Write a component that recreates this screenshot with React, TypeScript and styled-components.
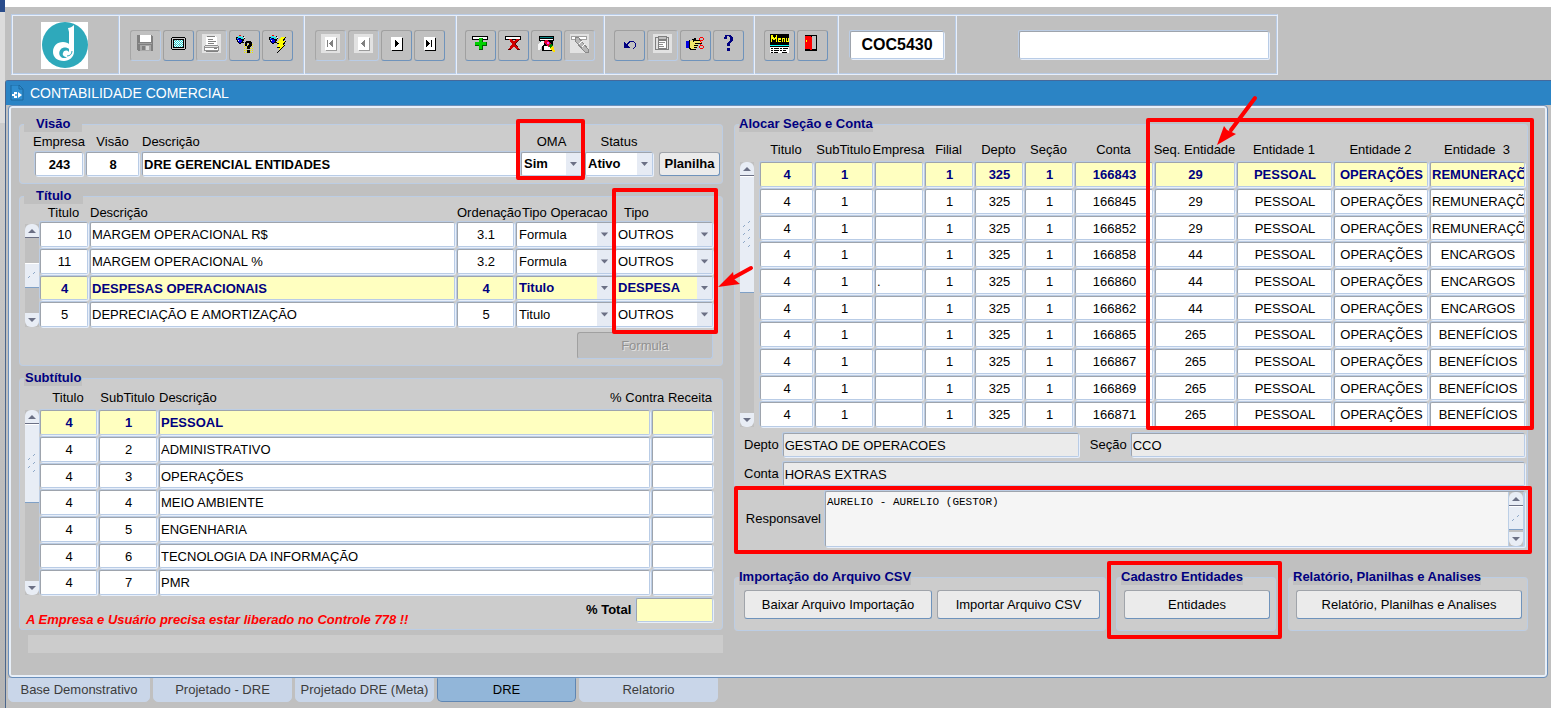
import React from 'react';
import styled, { createGlobalStyle, css } from 'styled-components';

const GlobalStyle = createGlobalStyle`
  *, *::before, *::after { box-sizing: border-box; }
  body {
    margin: 0;
    background: #c0c0c0;
    color: #000;
    font: 13px/16px "Liberation Sans", Arial, sans-serif;
  }
  input, select, button, textarea { font: inherit; color: inherit; margin: 0; }
`;

/* ---------- Page and window chrome ---------- */

const Page = styled.div`
  display: flex;
  min-height: 100vh;
`;

const DesktopEdge = styled.div`
  flex: 0 0 5px;
  background: linear-gradient(#2a4d8c 0 12px, #dcdcdc 12px 123px, #cccccc 123px, #b4b4b4);
`;

const Main = styled.main`
  flex: 1;
  min-width: 0;
  display: flex;
  flex-direction: column;
  border-top: 7px solid #fff;
`;

const Toolbar = styled.header`
  display: flex;
  align-self: flex-start;
  height: 61px;
  margin: 7px 0 5px 6px;
  padding: 1px 0 0 1px;
  border: 1px solid;
  border-color: #b9cce6 #e8effa #e8effa #b9cce6;
  box-shadow: inset 1px 1px 0 #e8effa, inset -1px -1px 0 #b9cce6;
`;

const ToolGroup = styled.div<{ $pad: number }>`
  display: flex;
  align-items: center;
  gap: 2px;
  padding: 0 ${(p) => p.$pad + 1}px 0 ${(p) => p.$pad}px;
  border-right: 1px solid #e8effa;
  box-shadow: inset -1px 0 0 #b9cce6;
  &:last-child { border-right: 0; padding-left: 62px; box-shadow: none; }
`;

const LogoCell = styled.div`
  width: 107px;
  display: flex;
  align-items: center;
  justify-content: center;
  padding-right: 4px;
  border-right: 1px solid #e8effa;
  box-shadow: inset -1px 0 0 #b9cce6;
`;

const ToolButton = styled.button`
  width: 31px;
  height: 31px;
  padding: 0 1px 3px 0;
  display: flex;
  align-items: center;
  justify-content: center;
  background: #c0c0c0;
  border: 1px solid;
  border-color: #a0a0a0 #6f93bb #6f93bb #a0a0a0;
  border-radius: 3px;
  &:disabled { border-color: #a6a6a6 #b9cce6 #b9cce6 #a6a6a6; }
`;

const sunken = css`
  border: 1px solid;
  border-color: #9ea4ad #b9cce6 #b9cce6 #9ea4ad;
  border-radius: 2px;
  box-shadow: 1px 1px 0 #e8effa, -1px -1px 0 #bccde4;
  outline: 0;
`;

const CodeInput = styled.input`
  ${sunken}
  width: 94px;
  height: 28px;
  padding: 0;
  background: #fff;
  text-align: center;
  font-size: 16px;
  font-weight: bold;
`;

const MessageInput = styled.input`
  ${sunken}
  width: 250px;
  height: 28px;
  background: #fff;
`;

const AppWindow = styled.section`
  flex: 1;
  border-left: 1px solid #4b668c;
  border-top: 1px solid #44699c;
  border-top-left-radius: 3px;
`;

const TitleBar = styled.h1`
  display: flex;
  align-items: center;
  gap: 6px;
  height: 24px;
  margin: 0;
  padding: 0 4px;
  background: #2b84c5;
  color: #fff;
  font-size: 14px;
  font-weight: normal;
`;

const Canvas = styled.div`
  display: flex;
  gap: 11px;
  margin: 0 3px 0 2px;
  padding: 10px 19px 24px 10px;
  border: 1px solid #6a8fbb;
  border-radius: 4px;
  box-shadow: inset 0 0 0 2px #e8eff8;
`;

const Column = styled.div<{ $grow: number }>`
  flex: ${(p) => p.$grow} 1 0;
  min-width: 0;
  display: flex;
  flex-direction: column;
`;

/* ---------- Panels ---------- */

const Panel = styled.fieldset<{ $gap?: number; $bottom?: number }>`
  min-width: 0;
  margin: ${(p) => p.$gap ?? 0}px 0 0;
  padding: 0 0 ${(p) => p.$bottom ?? 0}px;
  background: #cccccc;
  border: 1px solid #bccde4;
  border-radius: 4px;
`;

const Legend = styled.legend<{ $pad?: number }>`
  margin-left: 4px;
  padding: 0 ${(p) => p.$pad ?? 1}px;
  background: #c0c0c0;
  color: #000080;
  font-weight: bold;
  white-space: nowrap;
`;

const VisionFields = styled.div`
  display: flex;
  align-items: flex-end;
  gap: 3px;
  padding: 2px 2px 7px 15px;
  > button { margin-left: 3px; }
`;

const Field = styled.div<{ $width?: number; $align?: string }>`
  position: relative;
  flex: ${(p) => (p.$width ? `0 0 ${p.$width}px` : '1')};
  min-width: 0;
  display: flex;
  flex-direction: column;
  align-items: ${(p) => p.$align ?? 'center'};
  gap: 2px;
  white-space: nowrap;
`;

const TextInput = styled.input<{ $align?: string; $flag?: string }>`
  ${sunken}
  width: 100%;
  height: 24px;
  padding: 0 0 0 1px;
  background: ${(p) => (p.$flag === 'total' ? '#ffffc0' : p.readOnly ? '#ebebeb' : '#fff')};
  text-align: ${(p) => p.$align ?? 'left'};
  font-weight: ${(p) => (p.$flag === 'bold' ? 'bold' : 'normal')};
`;

const SelectBox = styled.span`
  position: relative;
  display: block;
  width: 100%;
  svg { position: absolute; right: 1px; top: 1px; height: calc(100% - 2px); pointer-events: none; }
`;

const Select = styled.select<{ $bold?: boolean }>`
  ${sunken}
  appearance: none;
  display: block;
  width: 100%;
  height: 24px;
  padding: 0 16px 0 2px;
  background: #fff;
  font-weight: ${(p) => (p.$bold ? 'bold' : 'inherit')};
`;

const PushButton = styled.button<{ $width?: number; $bold?: boolean; $tall?: boolean }>`
  flex: ${(p) => (p.$width ? `0 0 ${p.$width}px` : '1')};
  height: ${(p) => (p.$tall ? 29 : 24)}px;
  padding: 0;
  background: #ebebeb;
  border: 1px solid;
  border-color: #a0a4aa #6f93bb #6f93bb #a0a4aa;
  border-radius: 3px;
  font-weight: ${(p) => (p.$bold ? 'bold' : 'normal')};
  white-space: nowrap;
  &:disabled {
    height: 27px;
    background: #c0c0c0;
    border-color: #a0a0a0 #b9cce6 #b9cce6 #a0a0a0;
    color: #909090;
    text-shadow: 1px 1px 0 #e0e0e0;
  }
`;

/* ---------- Record grids ---------- */

const GridArea = styled.div<{ $gap: number; $right?: number }>`
  position: relative;
  display: flex;
  gap: ${(p) => p.$gap}px;
  padding: 0 ${(p) => p.$right ?? 0}px 0 5px;
`;

const Table = styled.table`
  flex: 1;
  width: 100%;
  min-width: 0;
  table-layout: fixed;
  border-collapse: collapse;
  th, td { padding: 0; font-weight: inherit; vertical-align: top; }
  td { padding-right: 2px; }
`;

const HeadCell = styled.span<{ $height: number; $align: string; $indent: number }>`
  display: flex;
  align-items: flex-end;
  justify-content: ${(p) => p.$align};
  height: ${(p) => p.$height}px;
  padding: 0 3px ${(p) => (p.$height > 20 ? 4 : 1)}px ${(p) => p.$indent}px;
  white-space: pre;
`;

const Row = styled.tr<{ $current: boolean }>`
  height: 27px;
  input, select { height: 25px; }
  &:nth-child(3n) { height: 26px; }
  &:nth-child(3n) input, &:nth-child(3n) select { height: 24px; }
  ${(p) => p.$current && css`
    color: #000080;
    font-weight: bold;
    input, select { background: #ffffc0; font-weight: bold; }
  `}
`;

const ScrollTrack = styled.div<{ $top: number; $end: number }>`
  flex: 0 0 14px;
  display: flex;
  flex-direction: column;
  margin: ${(p) => p.$top}px 0 ${(p) => p.$end}px;
  background: #c0c0c0;
`;

const ScrollEnd = styled.button<{ $down?: boolean }>`
  flex: 0 0 14px;
  display: flex;
  align-items: center;
  justify-content: center;
  padding: 0;
  background: #e8edf5;
  border: 0 solid #6b7085;
  border-bottom-width: ${(p) => (p.$down ? 0 : 1)}px;
  border-radius: ${(p) => (p.$down ? '0 0 6px 6px' : '6px 6px 0 0')};
`;

const ScrollRoom = styled.div<{ $offset: number }>`
  flex: 1;
  padding-top: ${(p) => p.$offset}px;
`;

const Thumb = styled.div<{ $size: number }>`
  height: ${(p) => p.$size}px;
  display: flex;
  align-items: center;
  justify-content: center;
  background: #e8edf5;
  border-top: 1px solid #fff;
  border-bottom: 1px solid #7fa0c6;
`;

const FormulaRow = styled.div`
  display: flex;
  justify-content: flex-end;
  padding: 3px 9px 6px 0;
`;

const TotalRow = styled.div`
  display: flex;
  align-items: flex-end;
  justify-content: space-between;
  padding: 1px 9px 1px 6px;
`;

const Warning = styled.strong`
  color: #ff0000;
  font-style: italic;
`;

const TotalField = styled.div`
  flex: 0 0 127px;
  display: flex;
  align-items: center;
  gap: 5px;
  padding-bottom: 6px;
  font-weight: bold;
  white-space: nowrap;
`;

const StatusLine = styled.div`
  height: 18px;
  margin: 5px 0 0 9px;
  background: #cccccc;
`;

const DetailRow = styled.div`
  display: flex;
  align-items: center;
  gap: 4px;
  padding: 4px 2px 1px 9px;
`;

const DetailLabel = styled.label<{ $width: number }>`
  flex: 0 0 ${(p) => p.$width}px;
  text-align: right;
`;

const OwnerRow = styled.div`
  position: relative;
  display: flex;
  align-items: center;
  gap: 4px;
  padding: 4px 2px 4px 9px;
`;

const OwnerBox = styled.div`
  ${sunken}
  flex: 1;
  display: flex;
  height: 56px;
  background: #f5f5f5;
`;

const OwnerText = styled.textarea`
  flex: 1;
  padding: 3px 1px;
  border: 0;
  outline: 0;
  resize: none;
  background: transparent;
  font: 11px/14px "Liberation Mono", "Courier New", monospace;
`;

const OwnerScroll = styled.div`
  flex: 0 0 16px;
  display: flex;
  padding: 0 1px;
  background: #bccfe6;
`;

const ActionGroups = styled.div`
  display: flex;
  margin-top: 16px;
`;

const ActionGroup = styled.div<{ $grow: number; $gap: number }>`
  position: relative;
  flex: ${(p) => p.$grow} 1 0;
  min-width: 0;
  margin-right: ${(p) => p.$gap}px;
`;

const ActionButtons = styled.div<{ $left: number }>`
  display: flex;
  gap: 5px;
  padding: 5px 5px 11px ${(p) => p.$left}px;
`;

/* ---------- Red mark-up laid over the form ---------- */

const Highlight = styled.div<{ $inset: string; $width?: number }>`
  position: absolute;
  z-index: 3;
  inset: ${(p) => p.$inset};
  width: ${(p) => (p.$width ? `${p.$width}px` : 'auto')};
  border: 4px solid #ff0000;
  border-radius: 2px;
  pointer-events: none;
`;

const Arrow = styled.svg<{ $inset: string }>`
  position: absolute;
  z-index: 4;
  inset: ${(p) => p.$inset};
  pointer-events: none;
`;

/* ---------- Tabs ---------- */

const Tabs = styled.nav`
  display: flex;
  gap: 3px;
  padding-left: 2px;
`;

const Tab = styled.button<{ $active?: boolean }>`
  width: 139px;
  height: 24px;
  padding: 0;
  background: ${(p) => (p.$active ? '#92b6d9' : '#c9d6e9')};
  border: 1px solid ${(p) => (p.$active ? '#5f86b3' : '#c9d6e9')};
  border-top-color: ${(p) => (p.$active ? '#92b6d9' : '#c9d6e9')};
  border-radius: 0 0 5px 5px;
  color: ${(p) => (p.$active ? '#000' : '#3c3c3c')};
  white-space: nowrap;
  &:first-child { width: 142px; }
`;

/* ---------- Icons ---------- */

const Px = ({ children }: { children: React.ReactNode }) => (
  <svg width="19" height="19" viewBox="0 0 19 19" shapeRendering="crispEdges" aria-hidden="true">
    {children}
  </svg>
);

const Flash = () => (
  <>
    <path d="M1 3h4v1h2v1h2v2H8v2H6v1H4V9H3V8H2V6H1z" fill="#000" />
    <path d="M2 4h2v1h2v1h1v2H6v1H4V8H3V6H2z" fill="#0000e0" />
    <path d="M3 2h3v1h2v2H6V4H3zM2 4h1v1H2z" fill="#20e8f0" />
    <path d="M4 1h2v1H4z" fill="#f00" />
    <path d="M8 2h1v1H8zM9 4h1v1H9zM8 8h1v1H8z" fill="#000" />
    <path d="M3 6h1v1H3zM9 3h1v1H9z" fill="#fff" />
  </>
);

const PageArrow = ({ off, children }: { off?: boolean; children: React.ReactNode }) => (
  <Px>
    {off && <path d="M0 0h19v19H0z" fill="#e2e2e2" />}
    <path d="M5 4h11v13H5z" fill={off ? '#9a9a9a' : '#000'} />
    <path d="M4 3h11v13H4z" fill="#fff" />
    <g fill={off ? '#808080' : '#000'}>{children}</g>
  </Px>
);

const icons: Record<string, React.ReactNode> = {
  save: (
    <Px>
      <path d="M1 1h15v1h1v15H2v-1H1z" fill="#808080" />
      <path d="M4 1h11v7H4z" fill="#fff" />
      <path d="M2 9h14v1H2z" fill="#a0a0a0" />
      <path d="M4 11h11v6H4z" fill="#a8a8a8" />
      <path d="M6 12h3v4H6z" fill="#808080" />
      <path d="M10 12h3v4h-3z" fill="#d8d8d8" />
    </Px>
  ),
  screen: (
    <Px>
      <path d="M3 3h13v1h1v11h-1v1H3v-1H2V4h1z" fill="#000" />
      <path d="M3 4h13v11H3z" fill="#c8c8c8" />
      <path d="M4 5h11v9H4z" fill="#000" />
      <path d="M5 6h9v7H5z" fill="#fff" />
      <path d="M5 6.5h9M5 8.5h9M5 10.5h9M5 12.5h9" stroke="#20d0d0" strokeDasharray="1 1" />
      <path d="M6 7.5h8M6 9.5h8M6 11.5h8" stroke="#20d0d0" strokeDasharray="1 1" />
      <path d="M6 6.5h8M6 10.5h8" stroke="#f8b8b8" strokeDasharray="1 3" />
    </Px>
  ),
  print: (
    <Px>
      <path d="M0 0h19v19H0z" fill="#e2e2e2" />
      <path d="M5 2h9v1h1v9H3v-1h1V3h1z" fill="#fff" />
      <path d="M5 2.5h8M6 5.5h5M6 7.5h8M6 9.5h6" stroke="#808080" />
      <path d="M3 11.5h13M2 13.5h15M2 16.5h14M2.5 12v5M16.5 12v5" stroke="#909090" />
      <path d="M3 14h13v2H3z" fill="#fff" />
      <path d="M12 14h3v1h-3zM4 17h12v1H4z" fill="#808080" />
    </Px>
  ),
  queryHelp: (
    <Px>
      <path d="M9 10.5h9M9 12.5h9M9 14.5h9M9 16.5h9M9 18.5h9" stroke="#f0e800" strokeDasharray="1 1" />
      <Flash />
      <path d="M11 7h5v1h1v4h-1v1h-1v2h-3v-3h1v-1h1V9h-2v3h-2V8h1zM12 16h3v3h-3z" fill="#000" />
    </Px>
  ),
  queryRun: (
    <Px>
      <Flash />
      <path d="M13 3h4l-2 4h3l-3 4h2l-7 7 2-5H9l2-4H9z" fill="#ffff00" />
      <path d="M17 3v1l-2 3M18 7l-3 4M17 11l-8 8M9 13h3M9 9h2" stroke="#000" fill="none" />
    </Px>
  ),
  first: <PageArrow off><path d="M6 6h1v7H6zM11 6h1v7h-1v-1h-1v-1H9v-1H8V9h1V8h1V7h1z" /></PageArrow>,
  prev: <PageArrow off><path d="M10 6h1v7h-1v-1H9v-1H8v-1H7V9h1V8h1V7h1z" /></PageArrow>,
  next: <PageArrow><path d="M8 6h1v1h1v1h1v1h1v1h-1v1h-1v1H9v1H8z" /></PageArrow>,
  last: <PageArrow><path d="M6 6h1v1h1v1h1v1h1v1H9v1H8v1H7v1H6zM11 6h1v7h-1z" /></PageArrow>,
  add: (
    <Px>
      <path d="M1 2h16v4H1z" fill="#000" />
      <path d="M2 3h14v2H2z" fill="#fff" />
      <path d="M8 4h4v4h4v4h-4v4H8v-4H4V8h4z" fill="#006000" />
      <path d="M8 4h3v4h4v3h-4v4H8v-4H4V8h4z" fill="#00d000" />
    </Px>
  ),
  remove: (
    <Px>
      <path d="M1 2h16v4H1z" fill="#000" />
      <path d="M2 3h14v2H2z" fill="#fff" />
      <path d="M5 5h3l2 3 2-3h4l-4 5 4 6h-3l-3-4-3 4H4l4-6z" fill="#600000" />
      <path d="M5 5h3l2 3 2-3h3l-4 5 4 5h-3l-2-3-3 3H5l3-5z" fill="#d00000" />
    </Px>
  ),
  clear: (
    <Px>
      <path d="M2 2h15v5H2zM4 7h12v10H5z" fill="#000" />
      <path d="M3 3h13v1H3z" fill="#008080" />
      <path d="M3 5h13v1H3zM7 12h8v4H7z" fill="#fff" />
      <path d="M3 7h3v2H3z" fill="#008080" />
      <path d="M1 11l3-4h3v4l-2 1-2 4H1z" fill="#f4f4f4" />
      <path d="M8 6h3l3 4-3 3-4-4z" fill="#e00030" />
      <path d="M10 8h2v2h-2z" fill="#ff40ff" />
      <path d="M11 12l3-2 2 2-3 2z" fill="#008000" />
      <path d="M13 14l3-2 2 5v1h-2z" fill="#ffe000" />
    </Px>
  ),
  edit: (
    <Px>
      <path d="M0 0h19v19H0z" fill="#e2e2e2" />
      <path d="M1 2h16v4H1z" fill="#a0a0a0" />
      <path d="M2 3h14v2H2z" fill="#fff" />
      <path d="M5 4l3-1 10 12v3h-3L5 7z" fill="#b8b8b8" stroke="#888888" />
      <path d="M9 10l3-3M12 13l3-3" stroke="#fff" />
    </Px>
  ),
  undo: (
    <Px>
      <path d="M7 9h1V8h1V7h5v1h1v1h1v4h-1v1h-1v1h-1v-1h1v-1h1V9h-1V8h-4v1H9v1H8v1H7z" fill="#000080" />
      <path d="M4 8h1v1h1v1h1v1h1v1h1v1h1v1H4z" fill="#000080" />
    </Px>
  ),
  paste: (
    <Px>
      <path d="M0 0h19v19H0z" fill="#e2e2e2" />
      <path d="M2 3.5h13M2 15.5h13M2.5 3v13M15.5 3v13" stroke="#808080" />
      <path d="M5 2h8v3H5z" fill="#c0c0c0" stroke="#808080" />
      <path d="M5 6h8v8H5z" fill="#fff" stroke="#808080" />
      <path d="M6 8.5h6M6 10.5h4M6 12.5h5" stroke="#909090" />
    </Px>
  ),
  cut: (
    <Px>
      <path d="M0 7h3v7H0z" fill="#0000e0" />
      <path d="M4 7h2V5h3v2h6v2h-4v1h1v2h-1v2H9v1H5v-1H4z" fill="#f0e86c" />
      <path d="M3 6h3V5h2V4h2v2h5v1H8v1H7V6H4v8h1v1h5v1H4v-1H3zM9 9h7v1H9zM8 11h4v1H8zM8 13h3v1H8z" fill="#000" />
      <path d="M14 3h3v1h-3zM13 4h1v2h-1zM17 4h1v2h-1zM14 6h3v1h-3zM14 11h3v1h-3zM13 12h1v2h-1zM17 12h1v2h-1zM14 14h3v1h-3zM14 7h1v1h-1zM15 8h1v1h-1zM14 10h1v1h-1z" fill="#ff0000" />
    </Px>
  ),
  help: (
    <Px>
      <path d="M6 1h6v1h1v1h1v4h-1v1h-1v1h-1v3H8V9h1V8h1V7h1V3h-1V2H8v3H5V3h1zM8 14h3v3H8z" fill="#000080" />
    </Px>
  ),
  menu: (
    <Px>
      <path d="M0 9h19v10H0z" fill="#fff" />
      <path d="M0 0h19v13H0z" fill="#000" />
      <path d="M0 11h19v1H0z" fill="#00ffff" />
      <path d="M1 8V1h2v2h1v1h1V3h1V1h1v7H6V5H5v1H3V5H2v3zM8 4h3v2H9v1h2v1H8zM12 8V4h3v4h-1V5h-1v3zM16 4h1v3h1V4h1v4h-3z" fill="#ffff00" />
      <path d="M1 14.5h2M4 14.5h5M10 14.5h2M13 14.5h5M1 16.5h2M4 16.5h5M10 16.5h2M13 16.5h3M1 18.5h2M4 18.5h4M12 18.5h5" stroke="#000" />
    </Px>
  ),
  exit: (
    <Px>
      <path d="M2 1h12v16H2z" fill="#000" />
      <path d="M9 2h4v13H9z" fill="#c0c0c0" />
      <path d="M2 2h6v13H2zM7 3h2v13H7z" fill="#ff0000" />
      <path d="M3 6h1v2H3z" fill="#ffff00" />
    </Px>
  ),
};

const Logo = () => (
  <svg width="47" height="47" viewBox="0 0 47 47" role="img" aria-label="Logo">
    <rect width="47" height="47" fill="#fff" />
    <circle cx="24" cy="23" r="23" fill="#2ea9bb" />
    <path d="M27 6c2 0 4-1 6-3v27c0 5-5 9-10 9-7 0-11-4-11-9 0-6 4-10 10-10 3 0 5 1 6 2V10z" fill="#fff" />
    <path d="M28 27c-2-2-6-2-8 0-3 3-2 8 2 9 2 0 3 0 4-1-3 0-5-2-4-4 1-3 4-3 6-1z" fill="#2ea9bb" />
    <path d="M26 34c3 0 5-2 5-5" fill="none" stroke="#2ea9bb" />
  </svg>
);

const WindowIcon = () => (
  <svg width="14" height="16" viewBox="0 0 14 16" aria-hidden="true">
    <path d="M1 0h8l4 4v11H1z" fill="#2f8ed0" stroke="#1c699f" />
    <path d="M9 0v4h4" fill="none" stroke="#1c699f" />
    <path d="M2 9h2V7h3v6H4v-2H2zM8 7l4 3-4 3z" fill="#fff" />
    <circle cx="6" cy="10" r="1" fill="#2f8ed0" />
  </svg>
);

const Triangle = ({ up }: { up?: boolean }) => (
  <svg width="8" height="4" viewBox="0 0 8 4" aria-hidden="true">
    <path d={up ? 'M0 4l4-4 4 4z' : 'M0 0h8L4 4z'} fill="#6b7085" />
  </svg>
);

const DropMark = () => (
  <svg width="15" viewBox="0 0 15 22" preserveAspectRatio="xMidYMid slice" aria-hidden="true">
    <path d="M0 0h15v24H0z" fill="#e6ebf4" />
    <path d="M4 9h7l-3.500 4z" fill="#6b7085" />
  </svg>
);

const Grip = ({ dots }: { dots: number }) => (
  <svg width="10" height={dots * 4 + 1} aria-hidden="true">
    {Array.from({ length: dots }, (_, i) => {
      const x = i % 2 ? 1 : 6;
      return <path key={i} d={`M${x} ${i * 4 + 3}l2-2`} stroke="#8fa9c8" strokeWidth="1" />;
    })}
  </svg>
);

/* ---------- Shared parts ---------- */

type ScrollProps = { top?: number; end?: number; offset?: number; size: number; dots: number };

const ScrollBar = ({ top = 0, end = 0, offset = 0, size, dots }: ScrollProps) => (
  <ScrollTrack $top={top} $end={end}>
    <ScrollEnd type="button" aria-label="Rolar para cima"><Triangle up /></ScrollEnd>
    <ScrollRoom $offset={offset}>
      <Thumb $size={size}><Grip dots={dots} /></Thumb>
    </ScrollRoom>
    <ScrollEnd type="button" $down aria-label="Rolar para baixo"><Triangle /></ScrollEnd>
  </ScrollTrack>
);

type ComboProps = { id?: string; label?: string; value: string; options: string[]; bold?: boolean };

const Combo = ({ id, label, value, options, bold }: ComboProps) => (
  <SelectBox>
    <Select id={id} aria-label={label} defaultValue={value} $bold={bold}>
      {options.map((o) => <option key={o}>{o}</option>)}
    </Select>
    <DropMark />
  </SelectBox>
);

type Col = {
  head: string;
  width?: number;
  align?: 'left' | 'center';
  headAlign?: string;
  indent?: number;
  options?: string[];
};

type GridProps = { cols: Col[]; rows: string[][]; current: number; headHeight: number };

const RecordGrid = ({ cols, rows, current, headHeight }: GridProps) => (
  <Table>
    <colgroup>
      {cols.map((c) => <col key={c.head} style={c.width ? { width: c.width } : undefined} />)}
    </colgroup>
    <thead>
      <tr>
        {cols.map((c) => (
          <th key={c.head} scope="col">
            <HeadCell
              $height={headHeight}
              $align={c.headAlign ?? (c.align === 'left' ? 'flex-start' : 'center')}
              $indent={c.indent ?? 0}
            >
              {c.head}
            </HeadCell>
          </th>
        ))}
      </tr>
    </thead>
    <tbody>
      {rows.map((row, r) => (
        <Row key={r} $current={r === current}>
          {cols.map((c, i) => (
            <td key={c.head}>
              {c.options ? (
                <Combo label={c.head} value={row[i]} options={c.options} />
              ) : (
                <TextInput aria-label={c.head} defaultValue={row[i]} $align={c.align ?? 'center'} />
              )}
            </td>
          ))}
        </Row>
      ))}
    </tbody>
  </Table>
);

/* ---------- Data ---------- */

const toolGroups: { pad: number; tools: [string, string, boolean?][] }[] = [
  { pad: 10, tools: [['save', 'Salvar', true], ['screen', 'Tela'], ['print', 'Imprimir', true], ['queryHelp', 'Entrar consulta'], ['queryRun', 'Executar consulta']] },
  { pad: 10, tools: [['first', 'Primeiro', true], ['prev', 'Anterior', true], ['next', 'Próximo'], ['last', 'Último']] },
  { pad: 8, tools: [['add', 'Inserir'], ['remove', 'Excluir'], ['clear', 'Limpar'], ['edit', 'Editar', true]] },
  { pad: 9, tools: [['undo', 'Desfazer'], ['paste', 'Colar', true], ['cut', 'Recortar'], ['help', 'Ajuda']] },
  { pad: 9, tools: [['menu', 'Menu'], ['exit', 'Sair']] },
];

const titleCols: Col[] = [
  { head: 'Titulo', width: 50 },
  { head: 'Descrição', align: 'left' },
  { head: 'Ordenação', width: 59, headAlign: 'flex-start' },
  { head: 'Tipo Operacao', width: 99, align: 'left', indent: 6, options: ['Formula', 'Titulo'] },
  { head: 'Tipo', width: 100, align: 'left', indent: 9, options: ['OUTROS', 'DESPESA'] },
];

const titleRows = [
  ['10', 'MARGEM OPERACIONAL R$', '3.1', 'Formula', 'OUTROS'],
  ['11', 'MARGEM OPERACIONAL %', '3.2', 'Formula', 'OUTROS'],
  ['4', 'DESPESAS OPERACIONAIS', '4', 'Titulo', 'DESPESA'],
  ['5', 'DEPRECIAÇÃO E AMORTIZAÇÃO', '5', 'Titulo', 'OUTROS'],
];

const subCols: Col[] = [
  { head: 'Titulo', width: 59 },
  { head: 'SubTitulo', width: 60 },
  { head: 'Descrição', align: 'left' },
  { head: '% Contra Receita', width: 63, headAlign: 'flex-end' },
];

const subRows = [
  'PESSOAL', 'ADMINISTRATIVO', 'OPERAÇÕES', 'MEIO AMBIENTE', 'ENGENHARIA', 'TECNOLOGIA DA INFORMAÇÃO', 'PMR',
].map((name, i) => ['4', String(i + 1), name, '']);

const allocCols: Col[] = [
  { head: 'Titulo', width: 55 },
  { head: 'SubTitulo', width: 60 },
  { head: 'Empresa', width: 50, align: 'left', headAlign: 'center' },
  { head: 'Filial', width: 50 },
  { head: 'Depto', width: 50 },
  { head: 'Seção', width: 50 },
  { head: 'Conta' },
  { head: 'Seq. Entidade', width: 82 },
  { head: 'Entidade 1', width: 97 },
  { head: 'Entidade 2', width: 96 },
  { head: 'Entidade  3', width: 97 },
];

const allocRows = [
  ['166843', '29', 'REMUNERAÇÕES'],
  ['166845', '29', 'REMUNERAÇÕES'],
  ['166852', '29', 'REMUNERAÇÕES'],
  ['166858', '44', 'ENCARGOS'],
  ['166860', '44', 'ENCARGOS'],
  ['166862', '44', 'ENCARGOS'],
  ['166865', '265', 'BENEFÍCIOS'],
  ['166867', '265', 'BENEFÍCIOS'],
  ['166869', '265', 'BENEFÍCIOS'],
  ['166871', '265', 'BENEFÍCIOS'],
].map(([conta, seq, ent], i) => [
  '4', '1', i === 4 ? '.' : '', '1', '325', '1', conta, seq, 'PESSOAL', 'OPERAÇÕES', ent,
]);

/* ---------- Screen ---------- */

export default function App() {
  return (
    <Page>
      <GlobalStyle />
      <DesktopEdge />
      <Main>
        <Toolbar>
          <LogoCell><Logo /></LogoCell>
          {toolGroups.map((g, i) => (
            <ToolGroup key={i} $pad={g.pad}>
              {g.tools.map(([icon, label, off]) => (
                <ToolButton key={icon} type="button" aria-label={label} disabled={off}>
                  {icons[icon]}
                </ToolButton>
              ))}
            </ToolGroup>
          ))}
          <ToolGroup $pad={11}>
            <CodeInput aria-label="Código da tela" defaultValue="COC5430" />
          </ToolGroup>
          <ToolGroup $pad={7}>
            <MessageInput aria-label="Mensagem" />
          </ToolGroup>
        </Toolbar>

        <AppWindow>
          <TitleBar><WindowIcon />CONTABILIDADE COMERCIAL</TitleBar>
          <Canvas>
            <Column $grow={704}>
              <Panel>
                <Legend $pad={12}>Visão</Legend>
                <VisionFields>
                  <Field $width={48}>
                    <label htmlFor="empresa">Empresa</label>
                    <TextInput id="empresa" defaultValue="243" $align="center" $flag="bold" />
                  </Field>
                  <Field $width={53}>
                    <label htmlFor="visao">Visão</label>
                    <TextInput id="visao" defaultValue="8" $align="center" $flag="bold" />
                  </Field>
                  <Field $align="flex-start">
                    <label htmlFor="descricao">Descrição</label>
                    <TextInput id="descricao" defaultValue="DRE GERENCIAL ENTIDADES" $flag="bold" />
                  </Field>
                  <Field $width={61}>
                    <label htmlFor="oma">OMA</label>
                    <Combo id="oma" value="Sim" options={['Sim', 'Não']} bold />
                    <Highlight $inset="-15px -3px -4px -5px" />
                  </Field>
                  <Field $width={68}>
                    <label htmlFor="status">Status</label>
                    <Combo id="status" value="Ativo" options={['Ativo', 'Inativo']} bold />
                  </Field>
                  <PushButton type="button" $width={61} $bold>Planilha</PushButton>
                </VisionFields>
              </Panel>

              <Panel $gap={4}>
                <Legend $pad={12}>Título</Legend>
                <GridArea $gap={1} $right={7}>
                  <ScrollBar top={20} end={2} offset={25} size={25} dots={2} />
                  <RecordGrid cols={titleCols} rows={titleRows} current={2} headHeight={18} />
                  <Highlight $inset="-16px 4px -5px auto" $width={106} />
                  <Arrow $inset="60px -34px auto auto" width="42" height="28" viewBox="0 0 42 28">
                    <path d="M37 4L17 15" stroke="#ff0000" strokeWidth="4" strokeLinecap="round" />
                    <path d="M4 23l15-15 1 7 6 5z" fill="#ff0000" />
                  </Arrow>
                </GridArea>
                <FormulaRow>
                  <PushButton type="button" disabled $width={136}>Formula</PushButton>
                </FormulaRow>
              </Panel>

              <Panel $gap={4}>
                <Legend>Subtítulo</Legend>
                <GridArea $gap={1} $right={7}>
                  <ScrollBar top={24} end={2} size={79} dots={5} />
                  <RecordGrid cols={subCols} rows={subRows} current={0} headHeight={24} />
                </GridArea>
                <TotalRow>
                  <Warning>A Empresa e Usuário precisa estar liberado no Controle 778 !!</Warning>
                  <TotalField>
                    <label htmlFor="total">% Total</label>
                    <TextInput id="total" $flag="total" />
                  </TotalField>
                </TotalRow>
              </Panel>
              <StatusLine />
            </Column>

            <Column $grow={794}>
              <Panel $bottom={1}>
                <Legend $pad={0}>Alocar Seção e Conta</Legend>
                <GridArea $gap={6}>
                  <ScrollBar top={30} end={2} size={117} dots={7} />
                  <RecordGrid cols={allocCols} rows={allocRows} current={0} headHeight={30} />
                  <Highlight $inset="-14px -7px -1px auto" $width={388} />
                  <Arrow $inset="-38px 269px auto auto" width="44" height="56" viewBox="0 0 44 56">
                    <path d="M41 4L17 36" stroke="#ff0000" strokeWidth="4" strokeLinecap="round" />
                    <path d="M3 51l7-19 3 4 9 4z" fill="#ff0000" />
                  </Arrow>
                </GridArea>
                <DetailRow>
                  <DetailLabel $width={34} htmlFor="depto">Depto</DetailLabel>
                  <Field $width={296}>
                    <TextInput id="depto" readOnly defaultValue="GESTAO DE OPERACOES" />
                  </Field>
                  <DetailLabel $width={44} htmlFor="secao">Seção</DetailLabel>
                  <Field><TextInput id="secao" readOnly defaultValue="CCO" /></Field>
                </DetailRow>
                <DetailRow>
                  <DetailLabel $width={34} htmlFor="conta">Conta</DetailLabel>
                  <Field><TextInput id="conta" readOnly defaultValue="HORAS EXTRAS" /></Field>
                </DetailRow>
                <OwnerRow>
                  <DetailLabel $width={77} htmlFor="responsavel">Responsavel</DetailLabel>
                  <OwnerBox>
                    <OwnerText id="responsavel" readOnly defaultValue="AURELIO - AURELIO (GESTOR)" />
                    <OwnerScroll><ScrollBar size={24} dots={2} /></OwnerScroll>
                  </OwnerBox>
                  <Highlight $inset="-1px -5px -3px -1px" />
                </OwnerRow>
              </Panel>

              <ActionGroups>
                <ActionGroup $grow={372} $gap={10}>
                  <Panel>
                    <Legend $pad={0}>Importação do Arquivo CSV</Legend>
                    <ActionButtons $left={9}>
                      <PushButton type="button" $tall $width={188}>Baixar Arquivo Importação</PushButton>
                      <PushButton type="button" $tall>Importar Arquivo CSV</PushButton>
                    </ActionButtons>
                  </Panel>
                </ActionGroup>
                <ActionGroup $grow={160} $gap={12}>
                  <Panel>
                    <Legend $pad={0}>Cadastro Entidades</Legend>
                    <ActionButtons $left={7}>
                      <PushButton type="button" $tall>Entidades</PushButton>
                    </ActionButtons>
                  </Panel>
                  <Highlight $inset="-8px -6px -8px -9px" />
                </ActionGroup>
                <ActionGroup $grow={240} $gap={0}>
                  <Panel>
                    <Legend $pad={0}>Relatório, Planilhas e Analises</Legend>
                    <ActionButtons $left={7}>
                      <PushButton type="button" $tall>Relatório, Planilhas e Analises</PushButton>
                    </ActionButtons>
                  </Panel>
                </ActionGroup>
              </ActionGroups>
            </Column>
          </Canvas>
          <Tabs>
            <Tab type="button">Base Demonstrativo</Tab>
            <Tab type="button">Projetado - DRE</Tab>
            <Tab type="button">Projetado DRE (Meta)</Tab>
            <Tab type="button" $active>DRE</Tab>
            <Tab type="button">Relatorio</Tab>
          </Tabs>
        </AppWindow>
      </Main>
    </Page>
  );
}
